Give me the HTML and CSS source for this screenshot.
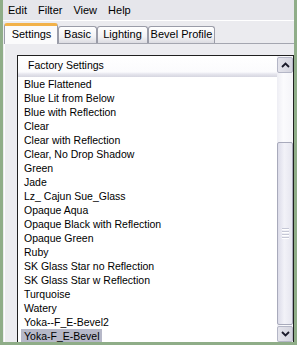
FILE: index.html
```html
<!DOCTYPE html>
<html>
<head>
<meta charset="utf-8">
<link rel="stylesheet" href="styles.css">
</head>
<body>
<div class="window">
  <div class="menubar">
    <span>Edit</span><span>Filter</span><span>View</span><span>Help</span>
  </div>
  <div class="tabstrip">
    <div class="tab active t-settings">Settings</div>
    <div class="tab t-basic">Basic</div>
    <div class="tab t-lighting">Lighting</div>
    <div class="tab t-bevel">Bevel Profile</div>
  </div>
  <div class="panel">
    <div class="listbox">
      <div class="list-main">
        <div class="list-header">Factory Settings</div>
        <div class="row"><span>Blue Flattened</span></div>
        <div class="row"><span>Blue Lit from Below</span></div>
        <div class="row"><span>Blue with Reflection</span></div>
        <div class="row"><span>Clear</span></div>
        <div class="row"><span>Clear with Reflection</span></div>
        <div class="row"><span>Clear, No Drop Shadow</span></div>
        <div class="row"><span>Green</span></div>
        <div class="row"><span>Jade</span></div>
        <div class="row"><span>Lz_ Cajun Sue_Glass</span></div>
        <div class="row"><span>Opaque Aqua</span></div>
        <div class="row"><span>Opaque Black with Reflection</span></div>
        <div class="row"><span>Opaque Green</span></div>
        <div class="row"><span>Ruby</span></div>
        <div class="row"><span>SK Glass Star no Reflection</span></div>
        <div class="row"><span>SK Glass Star w Reflection</span></div>
        <div class="row"><span>Turquoise</span></div>
        <div class="row"><span>Watery</span></div>
        <div class="row"><span>Yoka--F_E-Bevel2</span></div>
        <div class="row selected"><span>Yoka-F_E-Bevel</span></div>
      </div>
      <div class="scrollbar">
        <div class="sb-btn">
          <svg width="9" height="6" viewBox="0 0 9 6"><path d="M1 5 L4.5 1.5 L8 5" fill="none" stroke="#1a1a2a" stroke-width="1.8"/></svg>
        </div>
        <div class="sb-track"></div>
        <div class="sb-thumb">
          <div class="grip"><i></i><i></i><i></i><i></i></div>
        </div>
        <div class="sb-gap"></div>
        <div class="sb-btn">
          <svg width="9" height="6" viewBox="0 0 9 6"><path d="M1 1 L4.5 4.5 L8 1" fill="none" stroke="#1a1a2a" stroke-width="1.8"/></svg>
        </div>
      </div>
    </div>
  </div>
</div>
</body>
</html>
```

FILE: styles.css
```css
html, body {
  margin: 0;
  padding: 0;
}
body {
  background: #8fad88;
  width: 297px;
  height: 345px;
  overflow: hidden;
  padding: 0 3px 3px 3px;
  box-sizing: border-box;
  font-family: "Liberation Sans", Arial, sans-serif;
  color: #000;
}
.window {
  width: 291px;
  height: 342px;
  overflow: hidden;
  background: #ebebef;
}
.menubar {
  height: 20px;
  border-bottom: 1px solid #ffffff;
  background: #e6e6eb;
  display: flex;
  align-items: center;
  gap: 11px;
  padding-left: 5px;
  font-size: 11px;
}
.tabstrip {
  height: 22px;
  padding-top: 2px;
  box-sizing: border-box;
  display: flex;
  align-items: flex-end;
  padding-left: 1px;
  position: relative;
  z-index: 1;
}
.tab {
  box-sizing: border-box;
  height: 17px;
  font-size: 11px;
  line-height: 15px;
  text-align: center;
  border: 1px solid #9a9ca8;
  border-bottom: none;
  border-radius: 3px 3px 0 0;
  background: linear-gradient(#ffffff, #f2f2f4 60%, #dcdce2);
  white-space: nowrap;
}
.tab.active {
  height: 21px;
  margin-bottom: -1px;
  background: #fbfbfc;
  border-top: 3px solid #f2b24a;
  line-height: 17px;
  padding-left: 1px;
}
.t-settings { width: 54px; }
.t-basic { width: 39px; }
.t-lighting { width: 51px; }
.t-bevel { width: 67px; }
.panel {
  border-top: 1px solid #a4a6b0;
  border-left: 1px solid #fdfdfd;
  margin-left: 1px;
  padding: 11px 0 0 12px;
  background: #ececf0;
  height: 400px;
}
.listbox {
  width: 277px;
  box-sizing: border-box;
  border: 1px solid #202020;
  background: #ffffff;
  display: flex;
  align-items: flex-start;
  height: 400px;
}
.list-main {
  flex: 1;
  font-size: 10.5px;
}
.list-header {
  height: 21px;
  box-sizing: border-box;
  padding-left: 10px;
  line-height: 18px;
  background: linear-gradient(#ffffff 0, #fbfbfd 16px, #e6e6ee 18px, #d6d6e0 21px);
}
.row {
  height: 14px;
  line-height: 14px;
  white-space: nowrap;
}
.row span {
  display: inline-block;
  margin-left: 3px;
  padding: 0 3px;
}
.row.selected span {
  background: #b6b8c8;
}
.scrollbar {
  width: 16px;
  display: flex;
  flex-direction: column;
  background: linear-gradient(90deg, #eeeef4, #fbfbfd 40%, #f4f4f8);
}
.sb-btn {
  height: 16px;
  box-sizing: border-box;
  margin-top: 1px;
  border: 1px solid #b4b6c6;
  border-radius: 2px;
  background: linear-gradient(90deg, #e4e4ec, #d4d4de);
  display: flex;
  align-items: center;
  justify-content: center;
}
.sb-track {
  height: 69px;
}
.sb-thumb {
  height: 183px;
  box-sizing: border-box;
  border: 1px solid #a8aabb;
  border-radius: 2px;
  background: linear-gradient(90deg, #dcdce9, #f2f2f8 45%, #e6e6ef);
  display: flex;
  align-items: center;
  justify-content: center;
}
.grip {
  display: flex;
  flex-direction: column;
  gap: 1px;
}
.grip i {
  display: block;
  width: 7px;
  height: 1px;
  background: #c6c8d6;
  border-bottom: 1px solid #ffffff;
}
.sb-gap {
  height: 0;
}
```
